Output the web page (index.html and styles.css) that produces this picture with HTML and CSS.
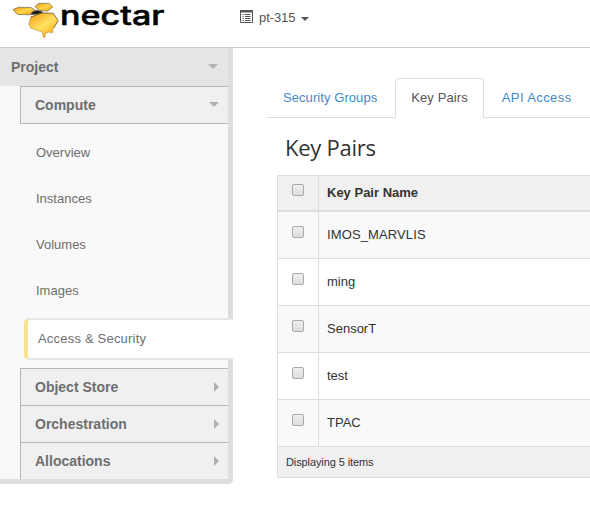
FILE: index.html
```html
<!DOCTYPE html>
<html lang="en">
<head>
<meta charset="utf-8">
<title>Key Pairs</title>
<link rel="stylesheet" href="styles.css">
</head>
<body>
<header class="topbar">
  <svg class="logo" width="168" height="42" viewBox="0 0 168 42" role="img" aria-label="nectar">
    <defs>
      <linearGradient id="honey" x1="0" y1="0" x2="1" y2="1">
        <stop offset="0" stop-color="#f08c05"/>
        <stop offset=".5" stop-color="#ffd84a"/>
        <stop offset="1" stop-color="#f8a00c"/>
      </linearGradient>
      <linearGradient id="comb" x1="0" y1="0" x2=".8" y2="1">
        <stop offset="0" stop-color="#f3950b"/>
        <stop offset=".55" stop-color="#ffe263"/>
        <stop offset="1" stop-color="#f9a60f"/>
      </linearGradient>
    </defs>
    <g stroke="#5a5240" stroke-width=".6" stroke-linejoin="round">
      <path d="M30.5 14.5 33 11.3 37 10.2 43 12 40 14.2Z" fill="#241d15"/>
      <path d="M13 9.5 18.8 7.2 31 7.6 34.7 9.7 29.5 14.8 17.3 14.4Z" fill="url(#honey)"/>
      <path d="M35 6.7 38.3 3.4 49 3.3 52.8 7 47.5 11.1 39 10.2Z" fill="url(#honey)"/>
      <path d="M30.8 17 42 13 53.3 13.3 58.2 20.7 52.8 29.5 52.5 32.8 48.5 32 45.2 33.8 45 37.2 43.2 37.2 42.4 32 31 28.2 28.8 24.5Z" fill="url(#comb)" stroke="#b08a38"/>
      <path d="M30.8 17 42 13 53.3 13.3 58.2 20.7 53.5 28.5" fill="none"/>
    </g>
    <text class="wordmark" x="60" y="25" textLength="104.5" lengthAdjust="spacingAndGlyphs">nectar</text>
  </svg>
  <div class="project-picker">
    <svg class="list-icon" width="13" height="13" viewBox="0 0 13 13">
      <path d="M.5.5h12v12H.5z" fill="#fff" stroke="#555"/>
      <path d="M0 0h13v2.5H0z" fill="#555"/>
      <path d="M2.5 4.5h1.2M5 4.5h5.5M2.5 6.5h1.2M5 6.5h5.5M2.5 8.5h1.2M5 8.5h5.5M2.5 10.5h1.2M5 10.5h5.5" stroke="#555"/>
    </svg>
    <span>pt-315</span>
    <i class="caret"></i>
  </div>
</header>
<div class="page">
  <nav class="sidebar">
    <div class="dashboard"><span>Project</span><i class="arrow-down"></i></div>
    <div class="group open"><span>Compute</span><i class="arrow-down"></i></div>
    <ul class="panels">
      <li>Overview</li>
      <li>Instances</li>
      <li>Volumes</li>
      <li>Images</li>
      <li class="active">Access &amp; Security</li>
    </ul>
    <div class="group"><span>Object Store</span><i class="arrow-right"></i></div>
    <div class="group"><span>Orchestration</span><i class="arrow-right"></i></div>
    <div class="group"><span>Allocations</span><i class="arrow-right"></i></div>
  </nav>
  <main class="content">
    <div class="tabs">
      <a class="tab">Security Groups</a>
      <a class="tab current">Key Pairs</a>
      <a class="tab">API Access</a>
    </div>
    <h1>Key Pairs</h1>
    <table>
      <thead><tr><th class="pick"><i class="box"></i></th><th>Key Pair Name</th></tr></thead>
      <tbody>
        <tr><td class="pick"><i class="box"></i></td><td class="wide">IMOS_MARVLIS</td></tr>
        <tr><td class="pick"><i class="box"></i></td><td>ming</td></tr>
        <tr><td class="pick"><i class="box"></i></td><td>SensorT</td></tr>
        <tr><td class="pick"><i class="box"></i></td><td>test</td></tr>
        <tr><td class="pick"><i class="box"></i></td><td>TPAC</td></tr>
      </tbody>
      <tfoot><tr><td colspan="2">Displaying 5 items</td></tr></tfoot>
    </table>
  </main>
</div>
</body>
</html>
```
FILE: styles.css
```css
* { box-sizing: border-box; }
body {
  margin: 0;
  width: 590px;
  height: 516px;
  overflow: hidden;
  background: #fff;
  color: #333;
  font: 13px/18px "Liberation Sans", Arial, sans-serif;
}
.topbar {
  display: flex;
  height: 48px;
  border-bottom: 1px solid #ccc;
}
.logo { display: block; flex: none; }
.wordmark { font: 500 26px Inter, "Liberation Sans", sans-serif; fill: #000; stroke: #000; stroke-width: .5; }
.project-picker {
  display: flex;
  align-items: center;
  height: 34px;
  margin-left: 72px;
  color: #555;
}
.project-picker span { padding-top: 1px; letter-spacing: -.08px; }
.list-icon { margin: -1px 6px 0 0; }
.caret {
  margin: 4px 0 0 6px;
  border: 4px solid transparent;
  border-top-color: #555;
  border-bottom: 0;
}
.page { display: flex; align-items: flex-start; }
.sidebar {
  width: 233px;
  height: 436px;
  flex: none;
  background: #f9f9f9;
  border: solid #ddd;
  border-width: 0 5px 5px 0;
  border-bottom-right-radius: 5px;
  color: #6e6e6e;
}
.dashboard, .group {
  display: flex;
  align-items: center;
  justify-content: space-between;
  font-size: 14px;
  font-weight: bold;
}
.dashboard { height: 38px; padding: 0 10px 0 11px; background: #e5e5e5; }
.group {
  height: 37px;
  margin-left: 20px;
  padding: 0 9px 0 14px;
  background: #f0f0f0;
  border: solid #b5b8ba;
  border-width: 1px 0 0 1px;
}
.group.open { height: 38px; border-bottom-width: 1px; }
.arrow-down { margin-top: -1px; border: 5px solid transparent; border-top-color: #adb1b3; border-bottom: 0; }
.arrow-right { border: 5px solid transparent; border-left-color: #adb1b3; border-right: 0; }
.panels { margin: 0; padding: 5px 0 8px; list-style: none; }
.panels li { height: 46px; padding-left: 36px; line-height: 47px; }
.panels .active {
  position: relative;
  width: 209px;
  height: 42px;
  margin: 5px 0 0 24px;
  padding-left: 10px;
  line-height: 38px;
  letter-spacing: .2px;
  background: #fff;
  border: solid #e5e5e5;
  border-width: 2px 0 2px 4px;
  border-left-color: #fce28d;
  border-radius: 5px 0 0 5px;
}
.content { flex: 1; min-width: 0; padding: 30px 0 0 34px; overflow: hidden; }
.tabs { display: flex; height: 40px; border-bottom: 1px solid #ddd; }
.tab {
  height: 40px;
  padding: 0 15px;
  border: 1px solid transparent;
  line-height: 38px;
  letter-spacing: .07px;
  color: #428bca;
  white-space: nowrap;
}
.tab + .tab { margin-left: 2px; }
.tab:last-child { letter-spacing: .4px; }
.tab.current {
  letter-spacing: .1px;
  color: #555;
  background: #fff;
  border-color: #ddd #ddd #fff;
  border-radius: 4px 4px 0 0;
}
h1 { margin: 14px 0 13px 18px; font: 400 22px/30px "Open Sans", sans-serif; letter-spacing: -.25px; }
table {
  width: 340px;
  margin-left: 10px;
  border-collapse: separate;
  border-spacing: 0;
  border: solid #ddd;
  border-width: 1px 0 1px 1px;
}
th, td { padding: 0 8px; text-align: left; }
th { height: 36px; background: #f0f0f0; border-bottom: 2px solid #ddd; }
td { height: 47px; border-bottom: 1px solid #ddd; }
.wide { letter-spacing: .12px; }
tbody tr:nth-child(odd) { background: #f9f9f9; }
.pick { width: 41px; padding: 0; border-right: 1px solid #ddd; }
.box {
  display: block;
  width: 12px;
  height: 12px;
  margin: -6px auto 0;
  border: 1px solid #aaa;
  border-radius: 2px;
  background: linear-gradient(#eee, #ddd);
}
tfoot td { height: 30px; border-bottom: 0; background: #f0f0f0; font-size: 11px; letter-spacing: -.1px; }
```
